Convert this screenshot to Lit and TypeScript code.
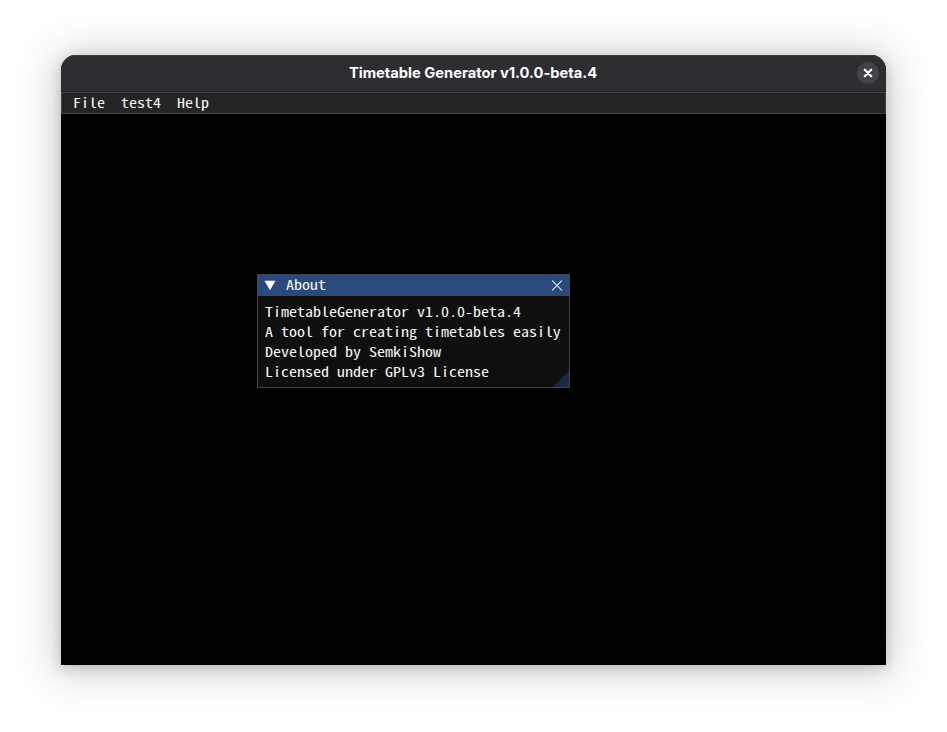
import { LitElement, html, css } from "lit";
import { customElement } from "lit/decorators.js";

const MENUS = ["File", "test4", "Help"];
const ABOUT_LINES = [
  "TimetableGenerator v1.0.0-beta.4",
  "A tool for creating timetables easily",
  "Developed by SemkiShow",
  "Licensed under GPLv3 License",
];

@customElement("about-dialog")
export class AboutDialog extends LitElement {
  static styles = css`
    :host {
      display: block;
      box-sizing: border-box;
      width: 313px;
      height: 114px;
      border: 1px solid #43434b;
      background: #0f0f0f;
      color: #f6f6f6;
    }
    .title {
      display: flex;
      align-items: center;
      height: 21px;
      background: #294a7a;
      padding: 0 6px;
    }
    .name {
      flex: 1;
      margin-left: 10px;
      line-height: 20px;
      padding-bottom: 3px;
      transform: scaleX(1.1765);
      transform-origin: 0 0;
    }
    svg { display: block; }
    .lines {
      padding: 5px 7px 0;
    }
    .line {
      height: 20px;
      line-height: 20px;
      white-space: pre;
      transform: scaleX(1.1765);
      transform-origin: 0 0;
    }
    .grip {
      position: absolute;
      right: 0;
      bottom: 0;
    }
  `;
  render() {
    return html`
      <div class="title">
        <svg width="12" height="12" viewBox="0 0 12 12"><path d="M.5 .8H11.5L6 10.2Z" fill="#fff" /></svg>
        <span class="name">About</span>
        <svg width="12" height="12" viewBox="0 0 12 12"><path d="M1 .5L11 10.5M11 .5L1 10.5" stroke="#fff" stroke-width="1.05" fill="none" /></svg>
      </div>
      <div class="lines">${ABOUT_LINES.map((t) => html`<div class="line">${t}</div>`)}</div>
      <svg class="grip" width="16" height="16" viewBox="0 0 16 16"><path d="M16 0V16H0Z" fill="#1a2a40" /></svg>
    `;
  }
}

@customElement("app-root")
export class AppRoot extends LitElement {
  static styles = css`
    :host {
      display: block;
      box-sizing: border-box;
      width: 947px;
      height: 732px;
      padding: 55px 61px 67px;
      background: #fff;
      overflow: hidden;
    }
    .window {
      display: flex;
      flex-direction: column;
      height: 610px;
      border-radius: 15px 15px 0 0;
      background: #000;
      box-shadow: 0 3px 12px 1px rgba(0, 0, 0, 0.15), 0 3px 42px 6px rgba(0, 0, 0, 0.19);
    }
    .header {
      display: grid;
      grid-template-columns: 1fr auto 1fr;
      align-items: center;
      box-sizing: border-box;
      height: 37px;
      padding: 0 7px 1px;
      border-radius: 15px 15px 0 0;
      background: #2e2e32;
      box-shadow: inset 0 1px #3d3d41, inset 0 -1px #222226;
    }
    .caption {
      grid-column: 2;
      font: 700 14.7px/20px Inter, sans-serif;
      color: #fff;
      white-space: nowrap;
      padding: 0 1px 1px 0;
    }
    .close {
      justify-self: end;
      display: grid;
      place-items: center;
      width: 22px;
      height: 22px;
      border-radius: 50%;
      background: #434347;
    }
    .menubar {
      box-sizing: border-box;
      height: 22px;
      padding: 0 11px;
      border: 1px solid #43434b;
      background: #242424;
      color: #f6f6f6;
      line-height: 19px;
    }
    .menus {
      display: flex;
      gap: 13.6px;
      transform: scaleX(1.1765);
      transform-origin: 0 0;
    }
    .menubar, .canvas {
      font-family: "Noto Sans Mono CJK SC", "DejaVu Sans Mono", monospace;
      font-size: 13.6px;
    }
    .canvas {
      position: relative;
      flex: 1;
    }
    about-dialog {
      position: absolute;
      left: 196px;
      top: 160px;
    }
  `;
  render() {
    return html`
      <div class="window">
        <div class="header">
          <span class="caption">Timetable Generator v1.0.0-beta.4</span>
          <span class="close">
            <svg width="10" height="10" viewBox="0 0 10 10">
              <path d="M1.8 1.8L8.2 8.2M8.2 1.8L1.8 8.2" stroke="#fff" stroke-width="2.3" stroke-linecap="round" />
            </svg>
          </span>
        </div>
        <div class="menubar"><div class="menus">${MENUS.map((m) => html`<span>${m}</span>`)}</div></div>
        <div class="canvas"><about-dialog></about-dialog></div>
      </div>
    `;
  }
}
